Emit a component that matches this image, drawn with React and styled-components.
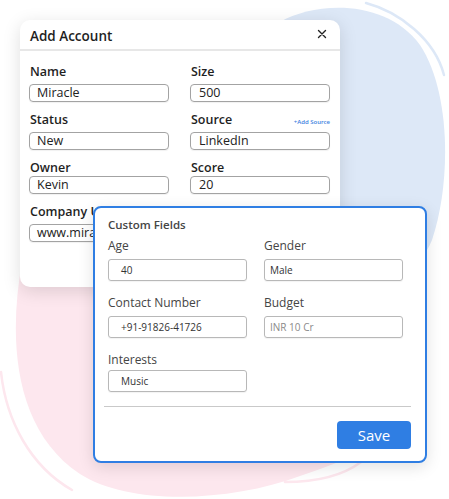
import React from "react";
import styled, { createGlobalStyle } from "styled-components";

const colors = {
  ink: "#1f1f1f",
  soft: "#454545",
  line: "#a3a3a3",
  blue: "#2f7ee3",
  pink: "#fde7ee",
  sky: "#dde8f7",
};

const GlobalStyle = createGlobalStyle`
  body {
    margin: 0;
    background: #ffffff;
    font-family: "Open Sans", "Liberation Sans", sans-serif;
  }
`;

const accountRows = [
  [
    { label: "Name", value: "Miracle" },
    { label: "Size", value: "500" },
  ],
  [
    { label: "Status", value: "New" },
    { label: "Source", value: "LinkedIn", extra: "+Add Source" },
  ],
  [
    { label: "Owner", value: "Kevin", tight: true },
    { label: "Score", value: "20", tight: true },
  ],
  [{ label: "Company URL", value: "www.miraclecrm.com" }],
];

const customRows = [
  [
    { label: "Age", value: "40", gap: 6 },
    { label: "Gender", value: "Male", gap: 6 },
  ],
  [
    { label: "Contact Number", value: "+91-91826-41726", gap: 6 },
    { label: "Budget", value: "INR 10 Cr", muted: true, gap: 6 },
  ],
  [{ label: "Interests", value: "Music", gap: 3 }],
];

// 배경 블롭 + 얇은 선
const Backdrop = () => (
  <BackSvg viewBox="0 0 449 499" width="449" height="499">
    <path
      d="M280 22 C315 2 385 -2 420 45 C450 90 452 180 432 240 C410 295 330 300 290 262 C250 220 245 60 280 22 Z"
      fill={colors.sky}
    />
    <path d="M366 3 C400 12 435 40 444 75" fill="none" stroke={colors.sky} strokeWidth="2.5" strokeLinecap="round" />
    <path
      d="M22 262 C8 340 14 430 80 474 C130 506 230 502 300 476 C340 462 372 452 385 430 L385 240 L22 240 Z"
      fill={colors.pink}
    />
    <path d="M1 372 C6 420 30 466 72 490" fill="none" stroke={colors.pink} strokeWidth="2.5" strokeLinecap="round" />
    <path d="M285 482 C320 482 345 474 361 462" fill="none" stroke={colors.pink} strokeWidth="2.5" strokeLinecap="round" />
  </BackSvg>
);

const App = () => {
  return (
    <>
      <GlobalStyle />
      <Stage>
        <Backdrop />
        <AccountCard>
          <CardHeader>
            <Title>Add Account</Title>
            <CloseIcon viewBox="0 0 10 10" width="10" height="10">
              <path d="M1.5 1.5 L8.5 8.5 M8.5 1.5 L1.5 8.5" stroke="#222" strokeWidth="1.4" strokeLinecap="round" />
            </CloseIcon>
          </CardHeader>
          <AccountGrid>
            {accountRows.flat().map((f, i) => (
              <Field key={i} $gap={f.tight ? 1 : 5}>
                <LabelRow>
                  <Label>{f.label}</Label>
                  {f.extra && <AddLink>{f.extra}</AddLink>}
                </LabelRow>
                <Input $inset={i % 2 === 0 ? 7 : 8}>{f.value}</Input>
              </Field>
            ))}
          </AccountGrid>
        </AccountCard>

        <CustomCard>
          <CustomTitle>Custom Fields</CustomTitle>
          <CustomGrid>
            {customRows.flat().map((f, i) => (
              <Field key={i} $gap={f.gap}>
                <SmallLabel>{f.label}</SmallLabel>
                <SmallInput $inset={i % 2 === 0 ? 12 : 5} $muted={f.muted}>
                  {f.value}
                </SmallInput>
              </Field>
            ))}
          </CustomGrid>
          <Divider />
          <Footer>
            <SaveButton>Save</SaveButton>
          </Footer>
        </CustomCard>
      </Stage>
    </>
  );
};

const Stage = styled.div`
  position: relative;
  width: 449px;
  height: 499px;
  overflow: hidden;
  padding: 20px 0 0 20px;
  box-sizing: border-box;
`;

const BackSvg = styled.svg`
  position: absolute;
  left: 0;
  top: 0;
`;

const AccountCard = styled.div`
  position: relative;
  width: 320px;
  height: 267px;
  background: #fff;
  border-radius: 10px;
  box-shadow: 0 4px 18px rgba(0, 0, 0, 0.13);
`;

const CardHeader = styled.div`
  height: 27px;
  display: flex;
  align-items: center;
  justify-content: space-between;
  padding: 2px 13px 0 10px;
  border-bottom: 2px solid #e7e7e7;
`;

const Title = styled.div`
  font-size: 13.5px;
  font-weight: 600;
  color: ${colors.ink};
`;

const CloseIcon = styled.svg`
  display: block;
  margin-top: -3px;
`;

const AccountGrid = styled.div`
  display: grid;
  grid-template-columns: 140px 140px;
  column-gap: 21px;
  row-gap: 11px;
  padding: 14px 0 0 9px;
`;

const Field = styled.div`
  display: flex;
  flex-direction: column;
  gap: ${(p) => p.$gap}px;
`;

const LabelRow = styled.div`
  display: flex;
  align-items: center;
  justify-content: space-between;
  padding-left: 1px;
`;

const Label = styled.div`
  font-size: 12.5px;
  line-height: 14px;
  font-weight: 600;
  color: ${colors.ink};
  white-space: nowrap;
`;

const AddLink = styled.span`
  font-size: 6px;
  font-weight: 600;
  color: #3d7fe0;
  margin-top: 4px;
`;

const Input = styled.div`
  height: 18px;
  box-sizing: border-box;
  border: 1px solid ${colors.line};
  border-radius: 4px;
  padding-left: ${(p) => p.$inset}px;
  font-size: 12.5px;
  line-height: 16px;
  color: #222;
  white-space: nowrap;
  overflow: hidden;
  box-shadow: 0 1px 1px rgba(0, 0, 0, 0.06);
`;

const CustomCard = styled.div`
  position: absolute;
  left: 93px;
  top: 206px;
  width: 334px;
  height: 257px;
  box-sizing: border-box;
  background: #fff;
  border: 2px solid ${colors.blue};
  border-radius: 8px;
  box-shadow: 0 4px 16px rgba(0, 0, 0, 0.12);
  padding: 10px 14px 11px 13px;
  display: flex;
  flex-direction: column;
`;

const CustomTitle = styled.div`
  font-size: 11.5px;
  line-height: 14px;
  font-weight: 600;
  color: ${colors.soft};
  margin-bottom: 7px;
`;

const CustomGrid = styled.div`
  display: grid;
  grid-template-columns: 139px 139px;
  column-gap: 17px;
  row-gap: 15px;
`;

const SmallLabel = styled.div`
  font-size: 12px;
  line-height: 14px;
  font-weight: 500;
  color: ${colors.soft};
  white-space: nowrap;
`;

const SmallInput = styled.div`
  height: 22px;
  box-sizing: border-box;
  border: 1px solid #b8b8b8;
  border-radius: 3px;
  padding-left: ${(p) => p.$inset}px;
  font-size: 10px;
  line-height: 20px;
  font-weight: 500;
  color: ${(p) => (p.$muted ? "#8a8a8a" : "#333")};
  white-space: nowrap;
  box-shadow: 0 1px 1px rgba(0, 0, 0, 0.05);
`;

const Divider = styled.div`
  height: 1px;
  background: #c9c9c9;
  margin: 14px 0 0 -4px;
`;

const Footer = styled.div`
  display: flex;
  justify-content: flex-end;
  margin-top: 14px;
`;

const SaveButton = styled.div`
  width: 74px;
  height: 28px;
  border-radius: 4px;
  background: ${colors.blue};
  color: #fff;
  font-size: 15px;
  font-weight: 500;
  display: flex;
  align-items: center;
  justify-content: center;
`;

export default App;
